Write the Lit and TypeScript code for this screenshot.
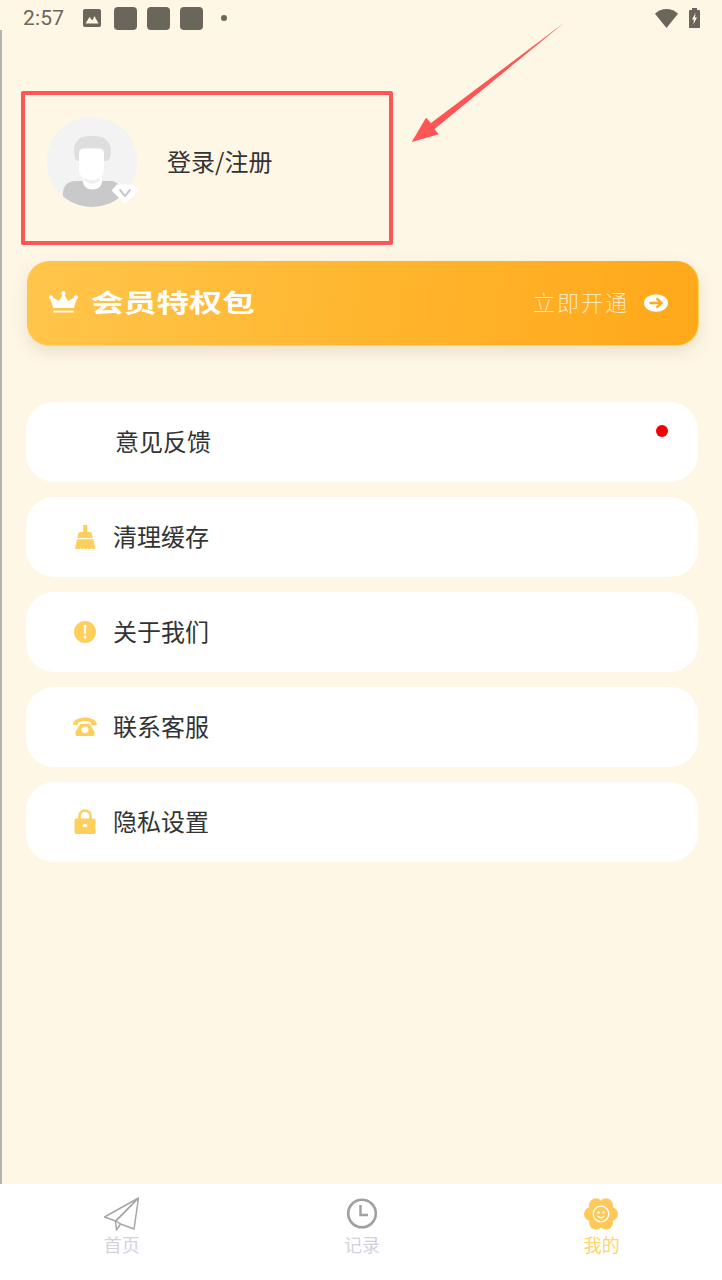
import { LitElement, html, css, svg } from "lit";
import { customElement } from "lit/decorators.js";

const broom = svg`<svg class="ic" width="22" height="27" viewBox="0 0 24 30"><path fill="#ffcf5c" d="M10 1h4.600v8H10zM6.500 9h11.500c1.400 0 2.200 2.500 2.400 6.500H3.600C3.800 11.500 5 9 6.500 9zM3.200 17h18.200l1.800 9.500c.1.800-.4 1.200-1 1.200h-2.700l-.7-1.500-.8 1.500h-2.800l-.7-1.500-.8 1.500h-2.800l-.7-1.500-.8 1.500H7.600l-.7-1.500-.8 1.500H2c-.7 0-1.200-.4-1-1.200z"/></svg>`;
const alert = svg`<svg class="ic" width="24" height="24" viewBox="0 0 24 24"><circle cx="12" cy="12" r="11" fill="#ffcf5c"/><path fill="#fff" d="M10.600 5h2.800l-.5 9h-1.800z"/><circle cx="12" cy="17" r="1.500" fill="#fff"/></svg>`;
const phone = svg`<svg class="ic" width="24" height="20" viewBox="0 0 24 22" preserveAspectRatio="none"><path fill="#ffcf5c" d="M0 7.500C1 3 6 .5 12 .5S23 3 24 7.500c0 1-.5 1.300-1.300 1.300h-3.400c-.8 0-1.200-.4-1.300-1.200l-.2-1.400C16.500 5 14.500 4.600 12 4.600S7.500 5 5.200 6.200L5 7.600c-.1.800-.5 1.200-1.300 1.200H1.300C.5 8.800 0 8.500 0 7.500z"/><path fill="#ffcf5c" fill-rule="evenodd" d="M7.500 7.500h9l5 8.500v3c0 1.100-.9 2-2 2h-15c-1.100 0-2-.9-2-2v-3zM12 10.500a3.500 3.500 0 1 0 0 7 3.500 3.500 0 0 0 0-7z"/></svg>`;
const lock = svg`<svg class="ic lock" width="24" height="25" viewBox="0 0 24 25"><path fill="none" stroke="#ffcf5c" stroke-width="2.600" d="M6.500 11V7a5.500 5.500 0 0 1 11 0V11"/><rect x="1.500" y="9.500" width="21" height="15.500" rx="2" fill="#ffcf5c"/><ellipse cx="12" cy="16.500" rx="2.300" ry="1.800" fill="#fff"/></svg>`;

interface Row { label: string; icon: unknown; dot?: boolean; }
const rows: Row[] = [
  { label: "意见反馈", icon: null, dot: true },
  { label: "清理缓存", icon: broom },
  { label: "关于我们", icon: alert },
  { label: "联系客服", icon: phone },
  { label: "隐私设置", icon: lock },
];

const lobes = [0, 60, 120, 180, 240, 300].map((a) => {
  const r = (a * Math.PI) / 180;
  return svg`<circle cx=${18 + 10 * Math.cos(r)} cy=${18 + 10 * Math.sin(r)} r="7" fill="#ffc95a"/>`;
});

@customElement("app-root")
export class AppRoot extends LitElement {
  static styles = css`
    :host {
      display: flex;
      flex-direction: column;
      position: relative;
      width: 722px;
      height: 1280px;
      overflow: hidden;
      background: #fff7e6;
      font-family: "Noto Sans CJK SC", "Noto Sans", sans-serif;
      color: #333;
    }
    .edge {
      position: absolute;
      left: 0;
      top: 30px;
      bottom: 96px;
      width: 1.5px;
      background: #b5b5b0;
    }
    .status {
      height: 36px;
      flex: none;
      display: flex;
      align-items: center;
      padding: 0 22px 0 23px;
      color: #6a665b;
    }
    .time {
      font-family: Roboto, sans-serif;
      font-size: 21px;
      width: 60px;
      letter-spacing: 0.2px;
    }
    .sq {
      width: 23px;
      height: 23px;
      border-radius: 4px;
      background: #6a665b;
      margin-left: 10px;
    }
    .sq.first { margin-left: 13px; }
    .mini { width: 6px; height: 6px; border-radius: 50%; background: #6a665b; margin-left: 18px; }
    .grow { flex: 1; }
    .wifi { margin-right: 11px; }
    .profile {
      flex: none;
      margin-top: 81px;
      padding-left: 47px;
      height: 90px;
      display: flex;
      align-items: center;
      gap: 30px;
    }
    .avatar { display: block; flex: none; overflow: visible; }
    .login { font-size: 24px; line-height: 34px; color: #333; margin-bottom: 2px; }
    .banner {
      flex: none;
      box-sizing: border-box;
      margin: 54px 23px 0 27px;
      height: 85px;
      border-radius: 22px;
      background: linear-gradient(100deg, #ffc64c 0%, #ffb62f 50%, #ffa81a 100%);
      border-bottom: 1.500px solid #f6d862;
      border-right: 1.500px solid #f6d862;
      box-shadow: 0 6px 16px rgba(120, 100, 60, 0.16);
      display: flex;
      align-items: center;
      padding: 0 30px 0 20px;
      color: #fff;
    }
    .crown { display: block; margin-bottom: 3px; flex: none; }
    .title {
      margin-left: 11px;
      margin-bottom: 4px;
      font-size: 25px;
      line-height: 30px;
      font-weight: 700;
      transform: scaleX(1.31);
      transform-origin: left center;
      white-space: nowrap;
    }
    .open {
      margin-left: auto;
      margin-bottom: 4px;
      font-size: 22px;
      letter-spacing: 2px;
      color: rgba(255, 255, 255, 0.72);
      font-weight: 300;
    }
    .go { margin-left: 15px; display: block; }
    .list {
      flex: none;
      margin: 56px 24px 0 26px;
      display: flex;
      flex-direction: column;
      gap: 15px;
    }
    .row {
      position: relative;
      height: 80px;
      border-radius: 28px;
      background: #fff;
      display: flex;
      align-items: center;
      padding-left: 47px;
      gap: 15px;
      font-size: 24px;
    }
    .lbl { margin-bottom: 4px; }
    .slot { width: 24px; display: flex; justify-content: center; flex: none; margin-right: 1px; }
    .ic { display: block; }
    .lock { margin-left: -1px; margin-bottom: 1px; }
    .row.noicon { padding-left: 89px; }
    .dot {
      position: absolute;
      top: 23px;
      right: 30px;
      width: 12px;
      height: 12px;
      border-radius: 50%;
      background: #f50000;
    }
    .nav {
      margin-top: auto;
      flex: none;
      height: 96px;
      background: #fff;
      display: grid;
      grid-template-columns: repeat(3, 1fr);
      padding-top: 12px;
      box-sizing: border-box;
    }
    .tab {
      display: flex;
      flex-direction: column;
      align-items: center;
      font-size: 18px;
      line-height: 20px;
      color: #d4d1dc;
    }
    .tab svg { display: block; margin-bottom: 2px; }
    .tab.on { color: #ffd36c; }
    .tab.on svg { margin-right: 2px; }
    .tab.first { transform: translateX(1.5px); }
    .tab.mid { transform: translateX(1px); }
    .mark {
      position: absolute;
      left: 21px;
      top: 91px;
      width: 372px;
      height: 154px;
      box-sizing: border-box;
      border: 4px solid #ff5555;
      border-radius: 2px;
    }
    .arrow { position: absolute; left: 400px; top: 15px; }
  `;

  render() {
    return html`
      <div class="status">
        <span class="time">2:57</span>
        <svg width="18" height="18" viewBox="0 0 18 18"><rect width="18" height="18" rx="2" fill="#6a665b"/><path fill="#fff7e6" d="M2.500 14.500 6.500 8l2.800 3.500L11.500 7l4 7.500z"/></svg>
        <span class="sq first"></span><span class="sq"></span><span class="sq"></span>
        <span class="mini"></span>
        <span class="grow"></span>
        <svg class="wifi" width="23" height="19" viewBox="0 0 23 19"><path fill="#6a665b" d="M0 4.800C3 1.800 7 0 11.500 0S20 1.800 23 4.800L11.500 19z"/></svg>
        <svg width="11" height="20" viewBox="0 0 11 20"><path fill="#6a665b" d="M3 0h5v2h2c.6 0 1 .4 1 1v16c0 .6-.4 1-1 1H1c-.6 0-1-.4-1-1V3c0-.6.4-1 1-1h2z"/><path fill="#fff7e6" d="M6.500 5 3 11.500h2L4.300 16.500 8 9.500H6z"/></svg>
      </div>

      <div class="profile">
        <svg class="avatar" width="90" height="90" viewBox="0 0 90 90">
          <defs><clipPath id="c"><circle cx="45" cy="45" r="45"/></clipPath></defs>
          <circle cx="45" cy="45" r="45" fill="#f3f3f4"/>
          <g clip-path="url(#c)">
            <path fill="#c9c9c9" d="M16 90V76c0-7 5-12 12-12h36c6 0 10 5 10 12v14z"/>
            <path fill="#fff" d="M36 60h19v4c0 5-4 8.500-9.500 8.500S36 69 36 64z"/>
            <path fill="#efefef" d="M37 58h16v5c-2 2-5 3.500-8 4-3-.5-6-2-8-4z"/>
            <path fill="#dedede" d="M27 34c0-5 1-8 3.500-10.500C33 20 38 19 46 19c6 0 11 1 14 4.500 3 3 4 6.500 4 10.500 0 5-1.500 8-3.500 10H30c-2-2-3-5-3-10z"/>
            <path fill="#fff" d="M32 36c0-3 2-4.500 4.500-4.500h16c2.500 0 4.500 1.500 4.500 4.500v16c0 7-5 11-12.500 11S32 59 32 52z"/>
          </g>
          <path fill="#fff" d="M70 67.500h16l5.500 6L78 87 64.500 73.500z"/>
          <path fill="none" stroke="#c9c9c9" stroke-width="2" d="M72.500 72.500 78 79l5.500-6.500"/>
        </svg>
        <span class="login">登录/注册</span>
      </div>

      <div class="banner">
        <svg class="crown" width="33" height="22" viewBox="0 0 33 22"><path fill="#fff" d="M16.500 0a2.200 2.200 0 0 1 1 4.100l3.500 6 5.800-3.400a2.100 2.100 0 1 1 2.700 1.800L26.800 17H6.200L3.500 8.500a2.100 2.100 0 1 1 2.700-1.800L12 10.100l3.500-6a2.200 2.200 0 0 1 1-4.100z"/><rect x="6.500" y="19.700" width="20" height="1.800" fill="#fff"/></svg>
        <span class="title">会员特权包</span>
        <span class="open">立即开通</span>
        <svg class="go" width="24" height="18" viewBox="0 0 24 18"><ellipse cx="12" cy="9" rx="12" ry="8.700" fill="#fff"/><path fill="none" stroke="#ffab1f" stroke-width="2.400" d="M5.500 9H17M12.500 4.300 17.500 9l-5 4.700"/></svg>
      </div>

      <div class="list">
        ${rows.map(
          (r) => html`<div class="row ${r.icon ? "" : "noicon"}">
            ${r.icon ? html`<span class="slot">${r.icon}</span>` : ""}
            <span class="lbl">${r.label}</span>
            ${r.dot ? html`<span class="dot"></span>` : ""}
          </div>`
        )}
      </div>

      <div class="nav">
        <div class="tab first">
          <svg width="36" height="36" viewBox="0 0 36 36"><g fill="none" stroke="#a6a6a6" stroke-width="1.500" stroke-linejoin="round"><path d="M35 2 1 21l11 4 23-23-4.500 31L17 28l-4 6-1-9"/><path d="M35 2 12.500 25l4.500 3"/></g></svg>
          首页
        </div>
        <div class="tab mid">
          <svg width="36" height="36" viewBox="0 0 36 36"><circle cx="18" cy="17.500" r="13.800" fill="none" stroke="#a0a0a0" stroke-width="2.600"/><path fill="none" stroke="#a0a0a0" stroke-width="2.400" d="M16.500 9V19H24"/></svg>
          记录
        </div>
        <div class="tab on">
          <svg width="36" height="36" viewBox="0 0 36 36">${lobes}<circle cx="18" cy="18" r="11" fill="#ffc95a"/><circle cx="18" cy="18" r="7.800" fill="none" stroke="#fff" stroke-width="1.300"/><path fill="#fff" d="M14.500 15.500h2v2h-2zM19.500 15.500h2v2h-2zM14 19.500c.8 2 2 3 4 3s3.200-1 4-3l-4 1.500z"/></svg>
          我的
        </div>
      </div>

      <span class="edge"></span>
      <div class="mark"></div>
      <svg class="arrow" width="170" height="135" viewBox="400 15 170 135"><polygon fill="#ff5555" points="564.500,22.500 434.500,129 438.700,134.300 411.700,142 426,117.700 431,123"/></svg>
    `;
  }
}
